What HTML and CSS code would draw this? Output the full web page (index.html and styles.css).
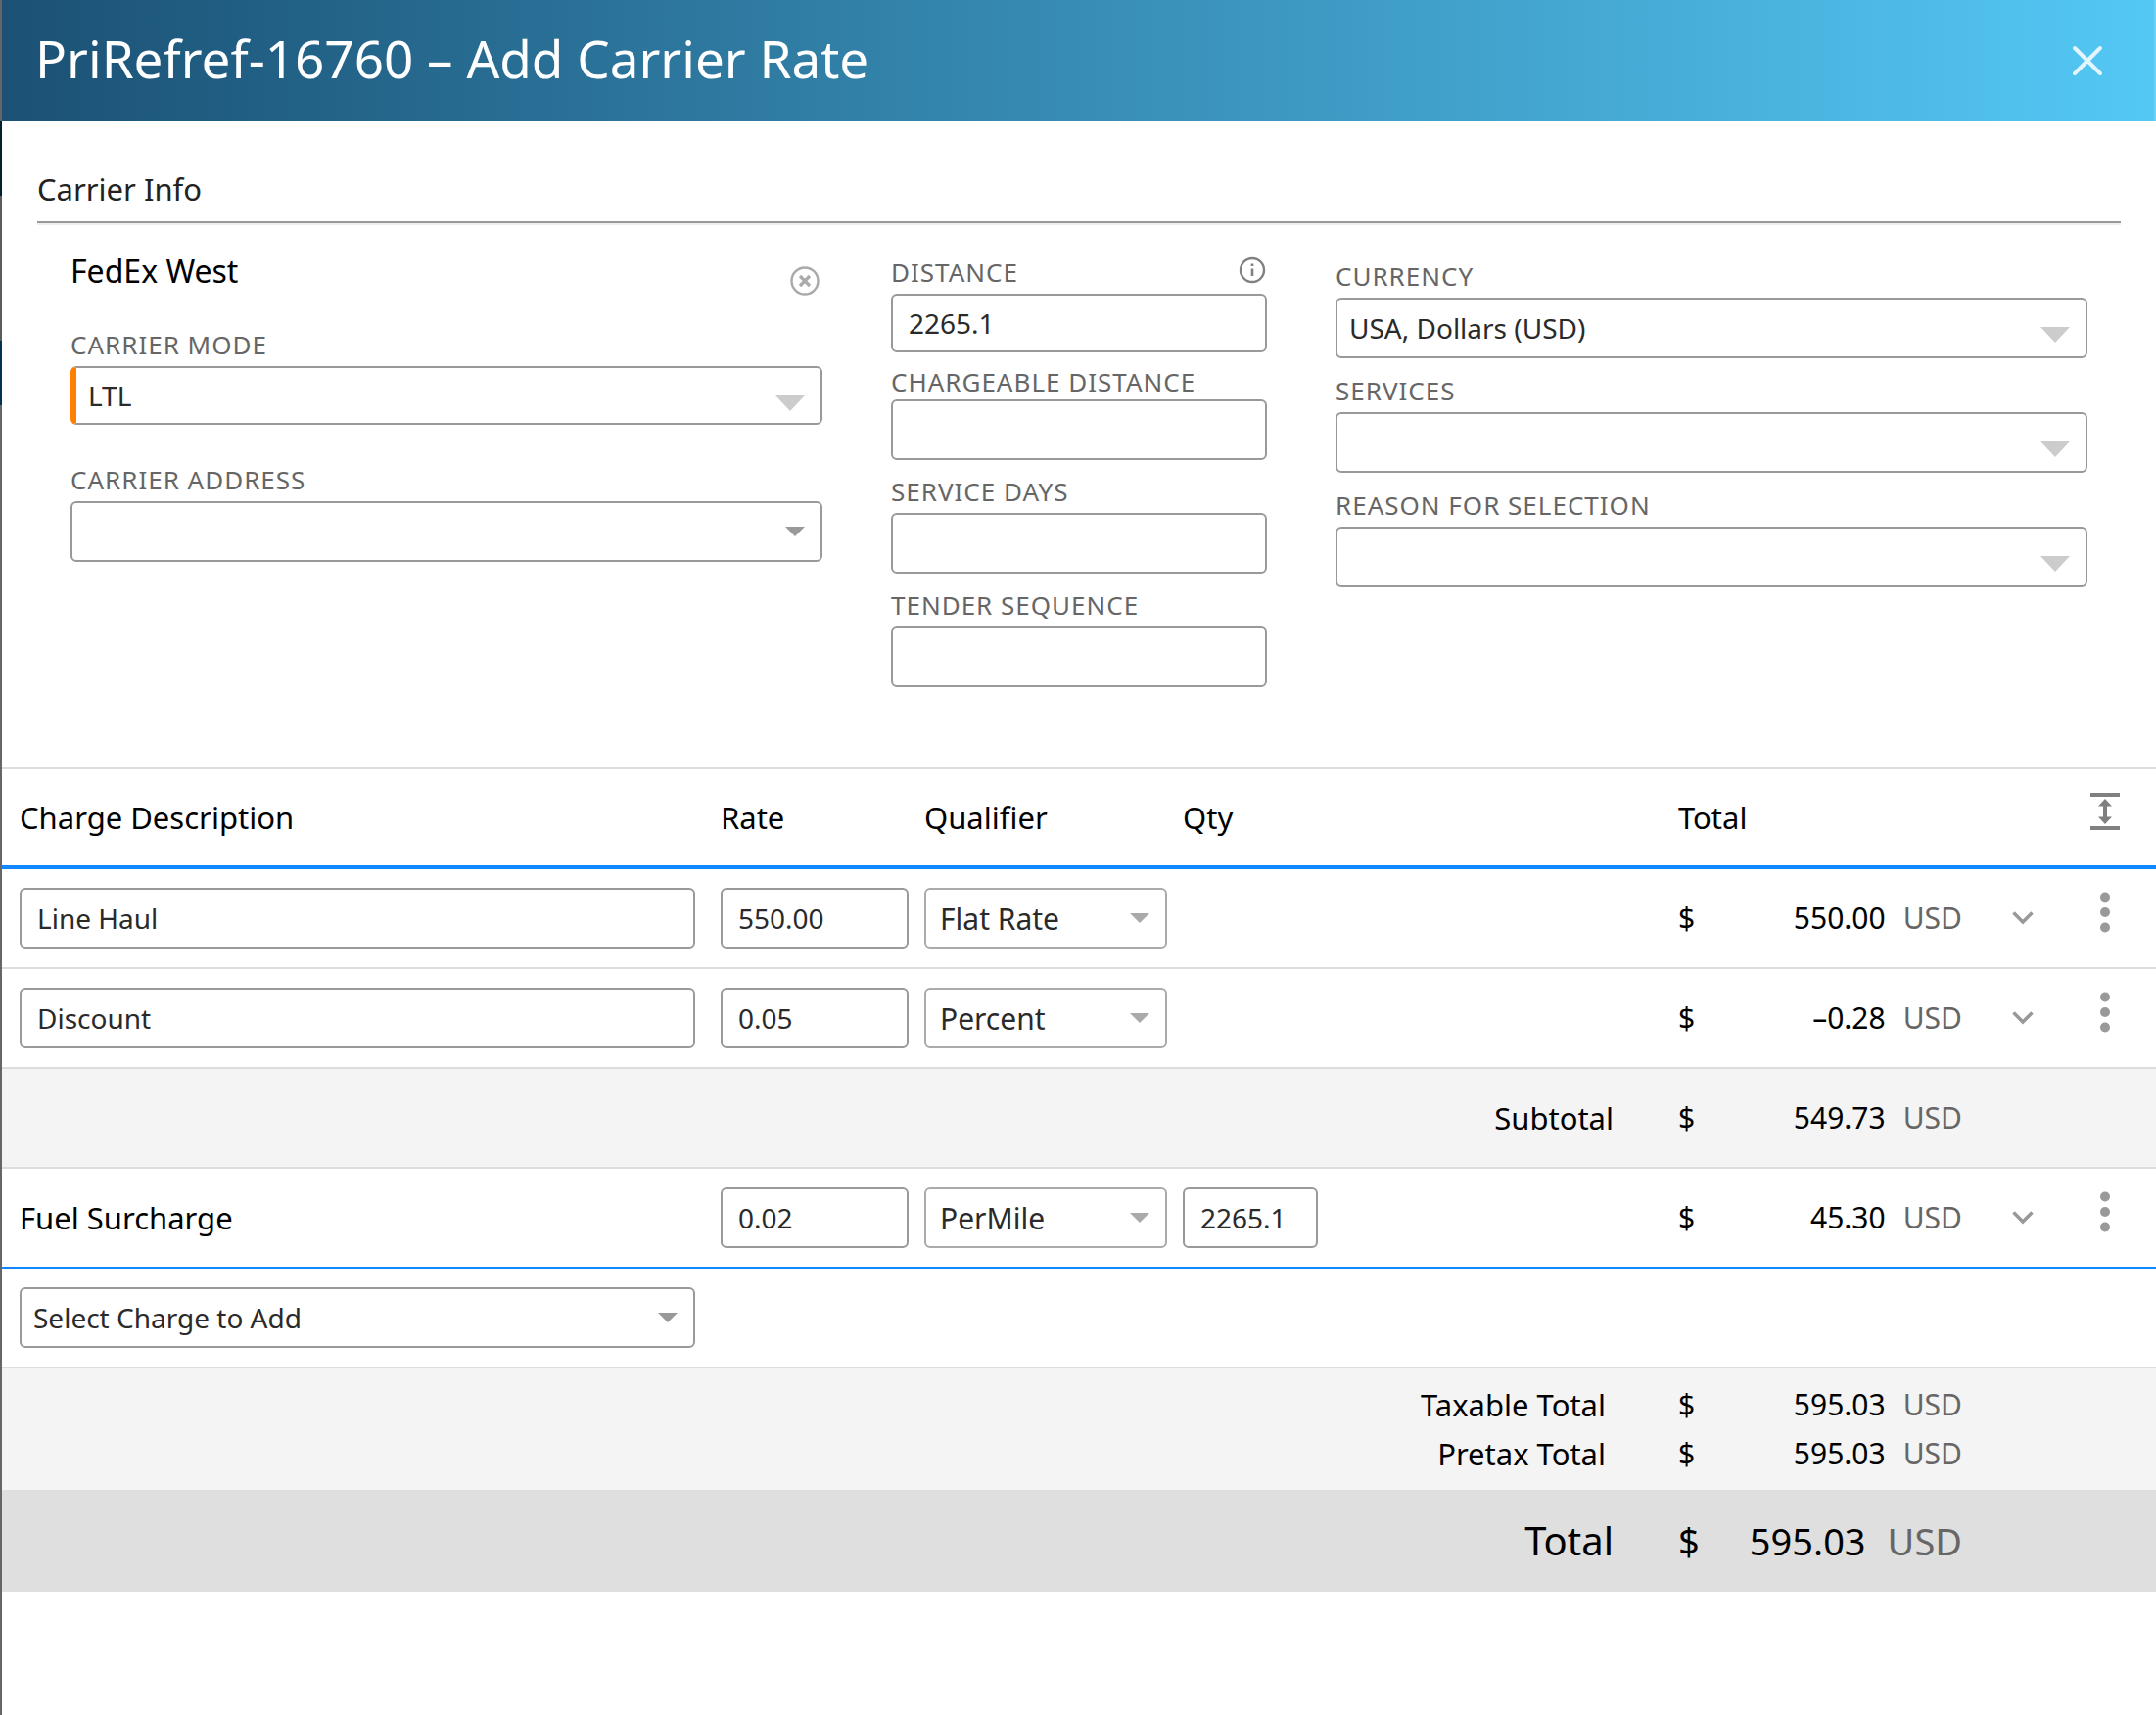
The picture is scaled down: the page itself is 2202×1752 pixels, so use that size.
FILE: index.html
```html
<!DOCTYPE html>
<html lang="en">
<head>
<meta charset="utf-8">
<meta name="viewport" content="width=device-width, initial-scale=1">
<title>Add Carrier Rate</title>
<link rel="stylesheet" href="styles.css">
</head>
<body>
<main class="dialog">
  <header class="dialog-header">
    <h1 class="dialog-title">PriRefref-16760 – Add Carrier Rate</h1>
    <button class="icon-button" type="button" aria-label="Close">
      <svg width="32" height="32" viewBox="0 0 32 32" fill="none" stroke="#e3f5fd" stroke-width="4" stroke-linecap="round"><path d="M3 3 29 29M29 3 3 29"/></svg>
    </button>
  </header>

  <section class="carrier">
    <h2 class="section-title">Carrier Info</h2>
    <div class="carrier-grid">
      <div class="column">
        <div class="carrier-name">
          <span>FedEx West</span>
          <button class="icon-button clear-button" type="button" aria-label="Remove carrier">
            <svg width="30" height="30" viewBox="0 0 30 30" fill="none" stroke="#aaa" stroke-width="2.4"><circle cx="15" cy="15" r="13.5"/><path stroke-width="3.2" d="M10 10 20 20M20 10 10 20"/></svg>
          </button>
        </div>
        <div class="field field-mode">
          <label for="mode">CARRIER MODE</label>
          <select id="mode" class="control control-compact select-wide required"><option>LTL</option></select>
        </div>
        <div class="field">
          <label for="address">CARRIER ADDRESS</label>
          <select id="address" class="control select-small"><option></option></select>
        </div>
      </div>
      <div class="column column-middle">
        <div class="field">
          <div class="label-row">
            <label for="distance">DISTANCE</label>
            <button class="icon-button" type="button" aria-label="About distance">
              <svg width="30" height="32" viewBox="0 0 30 32" fill="none" stroke="#808080" stroke-width="2.4"><circle cx="15" cy="14" r="12"/><path stroke-width="2.6" d="M15 12.5V20M15 7.5V10"/></svg>
            </button>
          </div>
          <input id="distance" class="control control-compact" value="2265.1">
        </div>
        <div class="field field-tight">
          <label for="chargeable">CHARGEABLE DISTANCE</label>
          <input id="chargeable" class="control">
        </div>
        <div class="field">
          <label for="days">SERVICE DAYS</label>
          <input id="days" class="control">
        </div>
        <div class="field">
          <label for="sequence">TENDER SEQUENCE</label>
          <input id="sequence" class="control">
        </div>
      </div>
      <div class="column column-last">
        <div class="field">
          <label for="currency">CURRENCY</label>
          <select id="currency" class="control select-wide"><option>USA, Dollars (USD)</option></select>
        </div>
        <div class="field">
          <label for="services">SERVICES</label>
          <select id="services" class="control select-wide"><option></option></select>
        </div>
        <div class="field">
          <label for="reason">REASON FOR SELECTION</label>
          <select id="reason" class="control select-wide"><option></option></select>
        </div>
      </div>
    </div>
  </section>

  <table class="charges">
    <colgroup>
      <col><col class="col-rate"><col class="col-qualifier"><col class="col-qty"><col class="col-label"><col class="col-total"><col class="col-expand"><col class="col-menu">
    </colgroup>
    <thead>
      <tr>
        <th scope="col">Charge Description</th>
        <th scope="col">Rate</th>
        <th scope="col">Qualifier</th>
        <th scope="col">Qty</th>
        <td></td>
        <th scope="col" class="total">Total</th>
        <td></td>
        <td class="menu">
          <button class="icon-button" type="button" aria-label="Expand all rows">
            <svg width="30" height="38" viewBox="0 0 30 38" fill="#808080"><path d="M0 0h30v4H0zM0 34h30v4H0zM15 6l7 7.500h-5v11h5L15 32l-7-7.500h5v-11H8z"/></svg>
          </button>
        </td>
      </tr>
    </thead>
    <tbody>
      <tr>
        <td><input class="control" aria-label="Charge description" value="Line Haul"></td>
        <td><input class="control" aria-label="Rate" value="550.00"></td>
        <td><select class="control select-cell" aria-label="Qualifier"><option>Flat Rate</option></select></td>
        <td></td>
        <td></td>
        <td class="total"><div class="money"><span>$</span><span class="amount">550.00</span><span class="unit">USD</span></div></td>
        <td class="expand"><button class="icon-button" type="button" aria-label="Expand row"><svg width="22" height="14" viewBox="0 0 22 14" fill="none" stroke="#999" stroke-width="3.500"><path d="M1.500 1.500 11 11 20.500 1.500"/></svg></button></td>
        <td class="menu"><button class="icon-button" type="button" aria-label="Row actions"><svg width="12" height="42" viewBox="0 0 12 42" fill="#999"><circle cx="6" cy="5.500" r="5"/><circle cx="6" cy="21" r="5"/><circle cx="6" cy="36.500" r="5"/></svg></button></td>
      </tr>
      <tr>
        <td><input class="control" aria-label="Charge description" value="Discount"></td>
        <td><input class="control" aria-label="Rate" value="0.05"></td>
        <td><select class="control select-cell" aria-label="Qualifier"><option>Percent</option></select></td>
        <td></td>
        <td></td>
        <td class="total"><div class="money"><span>$</span><span class="amount">–0.28</span><span class="unit">USD</span></div></td>
        <td class="expand"><button class="icon-button" type="button" aria-label="Expand row"><svg width="22" height="14" viewBox="0 0 22 14" fill="none" stroke="#999" stroke-width="3.500"><path d="M1.500 1.500 11 11 20.500 1.500"/></svg></button></td>
        <td class="menu"><button class="icon-button" type="button" aria-label="Row actions"><svg width="12" height="42" viewBox="0 0 12 42" fill="#999"><circle cx="6" cy="5.500" r="5"/><circle cx="6" cy="21" r="5"/><circle cx="6" cy="36.500" r="5"/></svg></button></td>
      </tr>
      <tr class="shaded">
        <th scope="row" class="row-label" colspan="5">Subtotal</th>
        <td class="total"><div class="money"><span>$</span><span class="amount">549.73</span><span class="unit">USD</span></div></td>
        <td colspan="2"></td>
      </tr>
      <tr class="last-charge">
        <th scope="row">Fuel Surcharge</th>
        <td><input class="control" aria-label="Rate" value="0.02"></td>
        <td><select class="control select-cell" aria-label="Qualifier"><option>PerMile</option></select></td>
        <td><input class="control" aria-label="Quantity" value="2265.1"></td>
        <td></td>
        <td class="total"><div class="money"><span>$</span><span class="amount">45.30</span><span class="unit">USD</span></div></td>
        <td class="expand"><button class="icon-button" type="button" aria-label="Expand row"><svg width="22" height="14" viewBox="0 0 22 14" fill="none" stroke="#999" stroke-width="3.500"><path d="M1.500 1.500 11 11 20.500 1.500"/></svg></button></td>
        <td class="menu"><button class="icon-button" type="button" aria-label="Row actions"><svg width="12" height="42" viewBox="0 0 12 42" fill="#999"><circle cx="6" cy="5.500" r="5"/><circle cx="6" cy="21" r="5"/><circle cx="6" cy="36.500" r="5"/></svg></button></td>
      </tr>
      <tr>
        <td><select class="control select-small" aria-label="Charge to add"><option>Select Charge to Add</option></select></td>
        <td colspan="7"></td>
      </tr>
    </tbody>
    <tfoot>
      <tr class="summary summary-first">
        <th scope="row" class="row-label" colspan="5">Taxable Total</th>
        <td class="total"><div class="money"><span>$</span><span class="amount">595.03</span><span class="unit">USD</span></div></td>
        <td colspan="2"></td>
      </tr>
      <tr class="summary summary-last">
        <th scope="row" class="row-label" colspan="5">Pretax Total</th>
        <td class="total"><div class="money"><span>$</span><span class="amount">595.03</span><span class="unit">USD</span></div></td>
        <td colspan="2"></td>
      </tr>
      <tr class="grand">
        <th scope="row" class="row-label" colspan="5">Total</th>
        <td class="total"><div class="money"><span>$</span><span class="amount">595.03</span><span class="unit">USD</span></div></td>
        <td colspan="2"></td>
      </tr>
    </tfoot>
  </table>
</main>
</body>
</html>
```

FILE: styles.css
```css
* {
  box-sizing: border-box;
}

body {
  margin: 0;
  padding-left: 2px;
  min-height: 100vh;
  background: linear-gradient(#666 124px, #04222c 124px 200px, #5c5c5c 200px 348px, #003350 348px 414px, #666 414px);
  font-family: "Noto Sans", sans-serif;
  font-size: 30px;
  line-height: 50px;
  color: #000;
}

.dialog {
  min-height: 100vh;
  background: #fff;
}

.dialog-header {
  display: flex;
  align-items: center;
  justify-content: space-between;
  height: 124px;
  padding: 0 54px 0 34px;
  background: linear-gradient(90deg, #1b5175, #54c8f5);
  box-shadow: inset -2px 0 #6dd0f7;
}

.dialog-title {
  margin: 0;
  padding-bottom: 4px;
  font-size: 53px;
  font-weight: 400;
  color: #fff;
}

.icon-button {
  display: flex;
  padding: 0;
  border: 0;
  background: none;
}

.carrier {
  padding: 44px 36px 82px;
}

.section-title {
  margin: 0;
  padding-bottom: 8px;
  border-bottom: 2px solid #999;
  box-shadow: 0 2px #eee;
  font-size: 31px;
  font-weight: 400;
  color: #222;
}

.carrier-grid {
  display: grid;
  grid-template-columns: 2fr 1fr 2fr;
  gap: 70px;
  padding: 24px 34px 0;
}

.column {
  display: flex;
  flex-direction: column;
  gap: 14px;
}

.column-middle {
  padding-top: 8px;
}

.column-last {
  padding-top: 12px;
  gap: 15px;
}

.carrier-name {
  display: flex;
  justify-content: space-between;
  padding-bottom: 18px;
  font-size: 32px;
}

.clear-button {
  align-self: flex-end;
  padding-right: 3px;
}

.field {
  display: flex;
  flex-direction: column;
  gap: 4px;
}

.field-mode {
  padding-bottom: 24px;
}

.field-tight {
  gap: 0;
  margin-top: -2px;
}

.field label {
  font-size: 26px;
  line-height: 36px;
  letter-spacing: 1px;
  color: #666;
}

.label-row {
  display: flex;
  align-items: center;
  justify-content: space-between;
}

.control {
  display: block;
  width: 100%;
  height: 62px;
  margin: 0;
  padding: 0 16px;
  border: 2px solid #999;
  border-radius: 6px;
  background-color: #fff;
  background-repeat: no-repeat;
  font-family: inherit;
  font-size: 28px;
  color: #2a2a2a;
}

.control-compact {
  height: 60px;
}

select.control {
  appearance: none;
  padding-left: 12px;
}

.select-wide {
  background-image: url("data:image/svg+xml,%3Csvg xmlns='http://www.w3.org/2000/svg' width='30' height='16'%3E%3Cpath d='M0 0h30L15 16z' fill='%23ccc'/%3E%3C/svg%3E");
  background-position: right 16px top 28px;
}

.select-small {
  background-image: url("data:image/svg+xml,%3Csvg xmlns='http://www.w3.org/2000/svg' width='20' height='10'%3E%3Cpath d='M0 0h20L10 10z' fill='%23999'/%3E%3C/svg%3E");
  background-position: right 16px center;
}

select.select-cell {
  padding-left: 14px;
  border-color: #aaa;
  background-image: url("data:image/svg+xml,%3Csvg xmlns='http://www.w3.org/2000/svg' width='20' height='10'%3E%3Cpath d='M0 0h20L10 10z' fill='%23aaa'/%3E%3C/svg%3E");
  background-position: right 16px center;
  font-size: 30px;
}

.required {
  border-left: 6px solid #ff8000;
}

.charges {
  width: 100%;
  border-collapse: separate;
  border-spacing: 0;
  border-top: 2px solid #ddd;
  table-layout: fixed;
}

.col-rate {
  width: 208px;
}

.col-qualifier {
  width: 264px;
}

.col-qty {
  width: 154px;
}

.col-label {
  width: 346px;
}

.col-total {
  width: 334px;
}

.col-expand {
  width: 64px;
}

.col-menu {
  width: 104px;
}

.charges th,
.charges td {
  height: 102px;
  padding: 0 8px;
  border-bottom: 2px solid #ddd;
  text-align: left;
  vertical-align: middle;
}

.charges th {
  font-size: 31px;
  font-weight: 400;
}

.charges thead th,
.charges thead td {
  border-bottom: 4px solid #1088ff;
}

.charges th:first-child,
.charges td:first-child {
  padding: 0 18px;
}

.charges .last-charge th,
.charges .last-charge td {
  border-bottom-color: #1088ff;
}

.charges .total {
  padding: 0 30px 0 14px;
}

.charges .expand,
.charges .menu {
  padding: 0;
}

.charges .icon-button {
  margin: 0 auto;
}

.charges .menu .icon-button {
  padding-bottom: 12px;
}

.shaded {
  background: #f4f4f4;
}

.charges .row-label.row-label {
  padding: 0 52px 0 18px;
  text-align: right;
}

.money {
  display: flex;
  gap: 18px;
}

.amount {
  flex: 1;
  text-align: right;
}

.unit {
  color: #666;
}

.summary {
  background: #f4f4f4;
}

.charges .summary th,
.charges .summary td {
  height: 62px;
  border-bottom: 0;
}

.charges .summary .row-label.row-label {
  padding-right: 60px;
}

.charges .summary-first th,
.charges .summary-first td {
  vertical-align: bottom;
}

.charges .summary-last th,
.charges .summary-last td {
  vertical-align: top;
}

.grand {
  background: #dfdfdf;
  font-size: 38px;
}

.charges .grand th,
.charges .grand td {
  height: 104px;
  border-bottom: 0;
}

.charges .grand th {
  font-size: 40px;
}

.grand .money {
  gap: 22px;
}
```
